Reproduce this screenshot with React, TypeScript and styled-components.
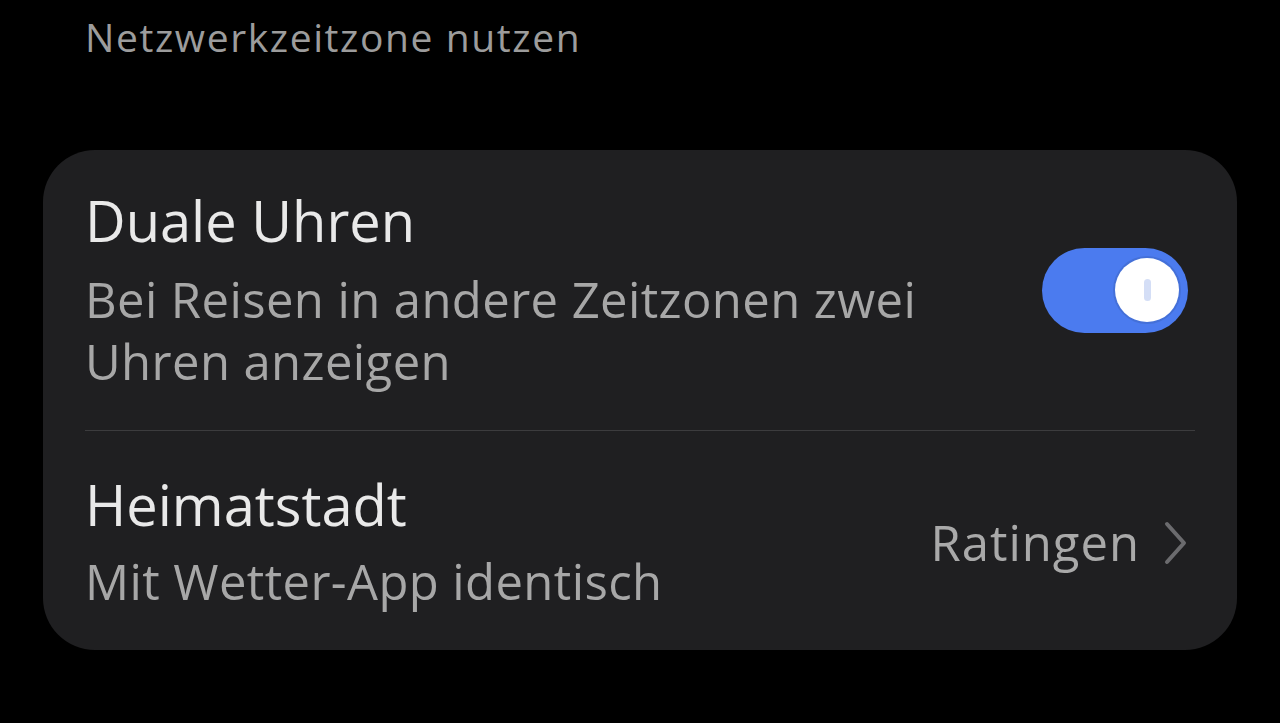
import React from "react";
import styled, { createGlobalStyle } from "styled-components";

const GlobalStyle = createGlobalStyle`
  html, body {
    margin: 0;
    padding: 0;
    background: #000;
  }
  body {
    font-family: "Open Sans", Roboto, "Liberation Sans", sans-serif;
    -webkit-font-smoothing: antialiased;
  }
`;

const Page = styled.div`
  width: 1280px;
  height: 723px;
  background: #000;
  overflow: hidden;
  display: flex;
  flex-direction: column;
`;

const Header = styled.div`
  padding: 11px 0 0 85px;
  height: 150px;
  flex-shrink: 0;
  box-sizing: border-box;
  font-size: 39px;
  line-height: 52px;
  letter-spacing: 1.6px;
  color: #9c9c9c;
`;

const Card = styled.div`
  margin: 0 43px;
  background: #1f1f21;
  border-radius: 52px;
  padding: 0 42px;
  display: flex;
  flex-direction: column;
`;

const Row = styled.div<{ $top: number; $bottom: number }>`
  display: flex;
  align-items: center;
  justify-content: space-between;
  padding: ${(p) => p.$top}px 7px ${(p) => p.$bottom}px 0;
`;

const TextCol = styled.div<{ $gap: number }>`
  display: flex;
  flex-direction: column;
  gap: ${(p) => p.$gap}px;
`;

const Title = styled.div`
  font-size: 56px;
  line-height: 64px;
  color: #e9e9e9;
`;

const Sub = styled.div`
  font-size: 49px;
  line-height: 62px;
  letter-spacing: 0.4px;
  color: #a7a7a7;
  max-width: 880px;
`;

const Divider = styled.div`
  height: 1px;
  background: #3c3c3e;
`;

const Toggle = styled.div`
  width: 146px;
  height: 85px;
  border-radius: 43px;
  background: #4b7bef;
  display: flex;
  align-items: center;
  justify-content: flex-end;
  padding-right: 9px;
  box-sizing: border-box;
  flex-shrink: 0;
`;

const Knob = styled.div`
  width: 64px;
  height: 64px;
  border-radius: 50%;
  background: #fff;
  box-shadow: 0 0 0 2px #4470d8;
  display: flex;
  align-items: center;
  justify-content: center;
`;

const KnobMark = styled.div`
  width: 7px;
  height: 22px;
  border-radius: 4px;
  background: #d4def6;
`;

const Value = styled.div`
  display: flex;
  align-items: center;
  gap: 24px;
  font-size: 49px;
  line-height: 62px;
  letter-spacing: 1px;
  color: #a9a9a9;
`;

const Chevron = styled.svg`
  display: block;
  margin-top: 2px;
`;

export default function App() {
  return (
    <>
      <GlobalStyle />
      <Page>
        <Header>Netzwerkzeitzone nutzen</Header>
        <Card>
          <Row $top={38} $bottom={38}>
            <TextCol $gap={16}>
              <Title>Duale Uhren</Title>
              <Sub>Bei Reisen in andere Zeitzonen zwei Uhren anzeigen</Sub>
            </TextCol>
            <Toggle>
              <Knob>
                <KnobMark />
              </Knob>
            </Toggle>
          </Row>
          <Divider />
          <Row $top={41} $bottom={38}>
            <TextCol $gap={14}>
              <Title>Heimatstadt</Title>
              <Sub>Mit Wetter-App identisch</Sub>
            </TextCol>
            <Value>
              Ratingen
              <Chevron width="24" height="44" viewBox="0 0 24 44" fill="none">
                <path
                  d="M3 3 L20 22 L3 41"
                  stroke="#6b6b6e"
                  strokeWidth="4"
                  strokeLinecap="round"
                  strokeLinejoin="round"
                />
              </Chevron>
            </Value>
          </Row>
        </Card>
      </Page>
    </>
  );
}
